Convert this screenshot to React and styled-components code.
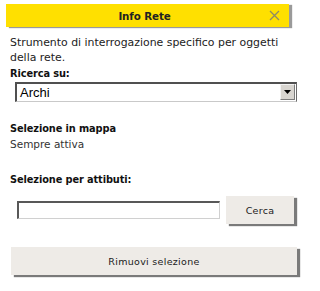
import React from "react";
import styled, { createGlobalStyle } from "styled-components";

const GlobalStyle = createGlobalStyle`
  html, body { margin: 0; padding: 0; background: #ffffff; }
  body { font-family: "DejaVu Sans", Verdana, sans-serif; color: #1e1e1e; }
  * { box-sizing: border-box; }
`;

const Panel = styled.div`
  width: 307px;
  height: 291px;
  padding: 4px 0 0 0;
  background: #fff;
  overflow: hidden;
`;

const Header = styled.div`
  margin-left: 6px;
  width: 283px;
  height: 23px;
  background: #ffe000;
  box-shadow: 3px 1px 1px #9a9a9a;
  display: flex;
  align-items: center;
  justify-content: center;
  position: relative;
`;

const Title = styled.div`
  font-family: "DejaVu Sans", Verdana, sans-serif;
  font-weight: bold;
  font-size: 10.3px;
  color: #222;
  margin-right: 6px;
  letter-spacing: -0.1px;
`;

const Close = styled.button`
  position: absolute;
  right: 9px;
  top: 6px;
  width: 11px;
  height: 11px;
  padding: 0;
  border: none;
  background: transparent;
  display: flex;
`;

const Body = styled.div`
  padding: 0 0 0 10px;
  display: flex;
  flex-direction: column;
`;

const Desc = styled.p`
  margin: 8px 0 0 0;
  font-size: 10.9px;
  line-height: 15px;
  color: #222;
  width: 285px;
`;

const Label = styled.div`
  font-weight: bold;
  font-size: 9.8px;
  line-height: 14px;
  color: #111;
  margin-top: ${(p) => p.$mt || 0}px;
  letter-spacing: -0.1px;
`;

const Text = styled.div`
  font-size: 10.5px;
  line-height: 15px;
  color: #333;
  margin-top: ${(p) => p.$mt || 0}px;
`;

const SelectBox = styled.div`
  margin: 1px 0 0 5px;
  width: 282px;
  height: 20px;
  border-top: 2px solid #505050;
  border-left: 2px solid #505050;
  border-right: 1px solid #6a6a6a;
  border-bottom: 1px solid #c9c9c9;
  display: flex;
  align-items: stretch;
  background: #fff;
`;

const SelectValue = styled.div`
  flex: 1;
  font-family: "Liberation Sans", Arial, sans-serif;
  font-size: 13px;
  line-height: 17px;
  padding-left: 3px;
  color: #000;
`;

const ArrowBtn = styled.div`
  width: 15px;
  margin: 0 1px 1px 0;
  background: #d8d5d0;
  border-top: 1px solid #f2f2f2;
  border-left: 1px solid #f2f2f2;
  border-right: 1px solid #7c7c7c;
  border-bottom: 1px solid #7c7c7c;
  display: flex;
  align-items: center;
  justify-content: center;
`;

const Row = styled.div`
  display: flex;
  align-items: center;
  margin-top: 8px;
  height: 30px;
`;

const Input = styled.input`
  margin-left: 7px;
  width: 203px;
  height: 18px;
  border-top: 2px solid #585858;
  border-left: 2px solid #585858;
  border-right: 1px solid #d0d0d0;
  border-bottom: 1px solid #d0d0d0;
  padding: 0 2px;
  outline: none;
  background: #fff;
`;

const Button = styled.button`
  width: ${(p) => p.$w}px;
  height: 28px;
  margin-left: ${(p) => p.$ml || 0}px;
  margin-top: ${(p) => p.$mt || 0}px;
  background: #eeebe7;
  border: none;
  box-shadow: 3px 2px 1px #7a7a7a;
  font-family: "DejaVu Sans", Verdana, sans-serif;
  font-size: 9.5px;
  color: #1a1a1a;
  letter-spacing: 0.3px;
  padding: 0;
`;

export default function App() {
  return (
    <>
      <GlobalStyle />
      <Panel>
        <Header>
          <Title>Info Rete</Title>
          <Close aria-label="Chiudi">
            <svg width="11" height="11" viewBox="0 0 11 11">
              <path d="M1 1 L10 10 M10 1 L1 10" stroke="#8f8a66" strokeWidth="1.3" fill="none" />
            </svg>
          </Close>
        </Header>
        <Body>
          <Desc>Strumento di interrogazione specifico per oggetti della rete.</Desc>
          <Label $mt={2}>Ricerca su:</Label>
          <SelectBox>
            <SelectValue>Archi</SelectValue>
            <ArrowBtn>
              <svg width="7" height="4" viewBox="0 0 7 4">
                <path d="M0 0 H7 L3.5 4 Z" fill="#000" />
              </svg>
            </ArrowBtn>
          </SelectBox>
          <Label $mt={20}>Selezione in mappa</Label>
          <Text $mt={1}>Sempre attiva</Text>
          <Label $mt={21}>Selezione per attibuti:</Label>
          <Row>
            <Input type="text" />
            <Button $w={68} $ml={6}>Cerca</Button>
          </Row>
          <Button $w={286} $ml={1} $mt={22}>Rimuovi selezione</Button>
        </Body>
      </Panel>
    </>
  );
}
